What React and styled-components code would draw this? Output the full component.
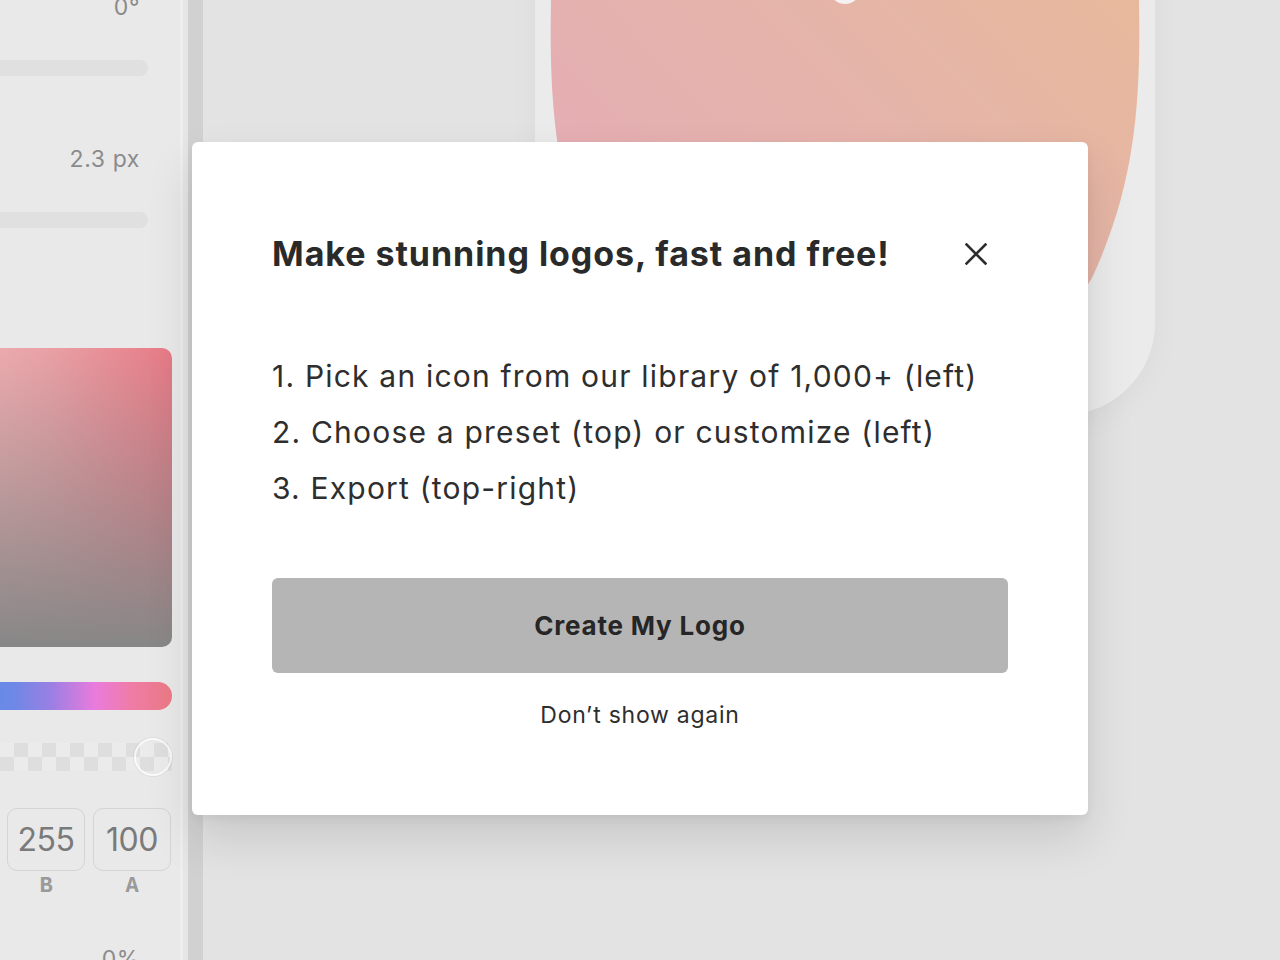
import React from "react";
import styled, { createGlobalStyle } from "styled-components";

const Global = createGlobalStyle`
  html, body { margin: 0; padding: 0; background: #e3e3e3; }
  body { font-family: Inter, "Noto Sans", sans-serif; -webkit-font-smoothing: antialiased; }
  * { box-sizing: border-box; }
`;

const Page = styled.div`
  position: relative;
  display: flex;
  width: 1280px;
  height: 960px;
  overflow: hidden;
  background: #e3e3e3;
`;

const Sidebar = styled.aside`
  flex: none;
  width: 183px;
  height: 100%;
  background: #e9e9e9;
  border-right: 3px solid #eeeeee;
  overflow: hidden;
`;

const SideColumn = styled.div`
  display: flex;
  flex-direction: column;
  width: 202px;
  margin-left: -30px;
`;

const ValueLabel = styled.div`
  margin-top: ${(p) => p.$top}px;
  padding-right: 32px;
  text-align: right;
  font-size: 23px;
  line-height: 24px;
  color: #8b8b8b;
  letter-spacing: 0.6px;
`;

const Track = styled.div`
  margin-top: ${(p) => p.$top}px;
  margin-right: 24px;
  height: 16px;
  border-radius: 8px;
  background: #e0e0e0;
`;

const Picker = styled.div`
  margin-top: 120px;
  height: 299px;
  border-radius: 10px;
  background: linear-gradient(to bottom, rgba(135, 135, 135, 0) 0%, rgba(135, 135, 135, 0.55) 55%, #878787 100%),
    linear-gradient(to right, #edb0b2 0%, #e9a0a5 40%, #e87a86 100%);
`;

const HueBar = styled.div`
  margin-top: 35px;
  height: 28px;
  border-radius: 14px;
  background: linear-gradient(to right, #5a8de6 0%, #6f88e6 22%, #9a7fe4 40%, #ea7bdc 62%, #ee7ca6 80%, #ec7a84 100%);
`;

const AlphaBar = styled.div`
  position: relative;
  margin-top: 33px;
  height: 28px;
  background: repeating-conic-gradient(#dedede 0% 25%, #ebebeb 0% 50%) 2px 0 / 28px 28px;
`;

const AlphaHandle = styled.span`
  position: absolute;
  right: 0;
  top: -5px;
  width: 38px;
  height: 38px;
  border-radius: 50%;
  border: 2px solid rgba(255, 255, 255, 0.75);
  box-shadow: 0 0 0 1px rgba(0, 0, 0, 0.05);
`;

const ChannelRow = styled.div`
  display: flex;
  justify-content: flex-end;
  gap: 8px;
  margin-top: 37px;
  margin-right: 1px;
`;

const Channel = styled.div`
  display: flex;
  flex-direction: column;
  align-items: center;
  width: 78px;
  flex: none;
`;

const ChannelBox = styled.div`
  width: 78px;
  height: 63px;
  border: 1.5px solid #d4d4d4;
  border-radius: 10px;
  display: flex;
  align-items: center;
  justify-content: center;
  font-size: 32px;
  color: #7a7a7a;
  letter-spacing: -0.4px;
`;

const ChannelName = styled.div`
  margin-top: 4px;
  font-family: "Liberation Mono", "DejaVu Sans Mono", monospace;
  font-weight: 700;
  font-size: 22px;
  line-height: 24px;
  color: #9a9a9a;
`;

const Gutter = styled.div`
  flex: none;
  width: 20px;
  height: 100%;
  display: flex;
`;

const GutterEdge = styled.div`
  width: 5px;
  background: #e6e6e6;
`;

const GutterTrack = styled.div`
  width: 15px;
  background: #d1d1d1;
`;

const Canvas = styled.main`
  flex: 1;
  height: 100%;
  overflow: hidden;
  background: #e3e3e3;
  display: flex;
  align-items: flex-start;
  padding-left: 332px;
`;

const Artboard = styled.div`
  flex: none;
  width: 620px;
  height: 615px;
  margin-top: -200px;
  border-radius: 0 0 92px 92px;
  background: #ebebeb;
  box-shadow: 0 8px 30px rgba(0, 0, 0, 0.04);
  overflow: hidden;
`;

const BlobSvg = styled.svg`
  display: block;
  width: 100%;
  height: 100%;
`;

const Overlay = styled.div`
  position: absolute;
  inset: 0;
  display: flex;
  align-items: center;
  justify-content: center;
  padding-bottom: 3px;
`;

const Modal = styled.div`
  width: 896px;
  height: 673px;
  background: #ffffff;
  border-radius: 6px;
  box-shadow: 0 24px 48px rgba(0, 0, 0, 0.12), 0 4px 10px rgba(0, 0, 0, 0.05);
  padding: 92px 80px 0 80px;
  display: flex;
  flex-direction: column;
`;

const Header = styled.div`
  display: flex;
  align-items: center;
  justify-content: space-between;
`;

const Title = styled.h2`
  margin: 0;
  font-size: 34px;
  line-height: 40px;
  font-weight: 700;
  color: #2a2a2a;
  letter-spacing: 0.95px;
`;

const CloseButton = styled.button`
  width: 40px;
  height: 40px;
  margin-right: 12px;
  padding: 0;
  border: 0;
  background: transparent;
  display: flex;
  align-items: center;
  justify-content: center;
  cursor: pointer;
  color: #2d2d2d;
`;

const Steps = styled.ol`
  list-style: none;
  margin: 74px 0 0 0;
  padding: 0;
`;

const Step = styled.li`
  font-size: 30px;
  line-height: 56px;
  color: #2e2e2e;
  letter-spacing: 1.2px;
`;

const Primary = styled.button`
  margin-top: 62px;
  width: 100%;
  height: 95px;
  border: 0;
  border-radius: 6px;
  background: #b5b5b5;
  font-family: inherit;
  font-size: 26px;
  font-weight: 700;
  color: #262626;
  letter-spacing: 0.8px;
  cursor: pointer;
`;

const TextLink = styled.button`
  margin: 26px auto 0;
  border: 0;
  background: transparent;
  font-family: inherit;
  font-size: 23px;
  line-height: 30px;
  color: #2e2e2e;
  letter-spacing: 0.75px;
  cursor: pointer;
`;

function CloseIcon() {
  return (
    <svg width="22" height="22" viewBox="0 0 22 22" fill="none">
      <path d="M1.5 1.5 L20.5 20.5 M20.5 1.5 L1.5 20.5" stroke="currentColor" strokeWidth="2.6" strokeLinecap="square" />
    </svg>
  );
}

function Blob() {
  return (
    <BlobSvg viewBox="0 0 620 615" preserveAspectRatio="none">
      <defs>
        <linearGradient id="blobGrad" x1="0.15" y1="0.9" x2="0.95" y2="0.1">
          <stop offset="0" stopColor="#e5acb6" />
          <stop offset="0.5" stopColor="#e5b4aa" />
          <stop offset="1" stopColor="#e8ba97" />
        </linearGradient>
      </defs>
      <path
        d="M16 0 H604 V200 C606 305 600 385 557 478 C500 575 400 610 310 612 C220 610 120 575 63 478 C20 385 14 305 16 200 Z"
        fill="url(#blobGrad)"
      />
      <circle cx="310" cy="188" r="16" fill="#f4f1f0" />
    </BlobSvg>
  );
}

export default function App() {
  return (
    <>
      <Global />
      <Page>
        <Sidebar>
          <SideColumn>
            <ValueLabel $top={-5}>0°</ValueLabel>
            <Track $top={41} />
            <ValueLabel $top={71}>2.3 px</ValueLabel>
            <Track $top={41} />
            <Picker />
            <HueBar />
            <AlphaBar>
              <AlphaHandle />
            </AlphaBar>
            <ChannelRow>
              <Channel>
                <ChannelBox>255</ChannelBox>
                <ChannelName>G</ChannelName>
              </Channel>
              <Channel>
                <ChannelBox>255</ChannelBox>
                <ChannelName>B</ChannelName>
              </Channel>
              <Channel>
                <ChannelBox>100</ChannelBox>
                <ChannelName>A</ChannelName>
              </Channel>
            </ChannelRow>
            <ValueLabel $top={48}>0%</ValueLabel>
          </SideColumn>
        </Sidebar>
        <Gutter>
          <GutterEdge />
          <GutterTrack />
        </Gutter>
        <Canvas>
          <Artboard>
            <Blob />
          </Artboard>
        </Canvas>
        <Overlay>
          <Modal role="dialog" aria-label="Welcome">
            <Header>
              <Title>Make stunning logos, fast and free!</Title>
              <CloseButton aria-label="Close">
                <CloseIcon />
              </CloseButton>
            </Header>
            <Steps>
              <Step>1. Pick an icon from our library of 1,000+ (left)</Step>
              <Step>2. Choose a preset (top) or customize (left)</Step>
              <Step>3. Export (top-right)</Step>
            </Steps>
            <Primary>Create My Logo</Primary>
            <TextLink>Don’t show again</TextLink>
          </Modal>
        </Overlay>
      </Page>
    </>
  );
}
